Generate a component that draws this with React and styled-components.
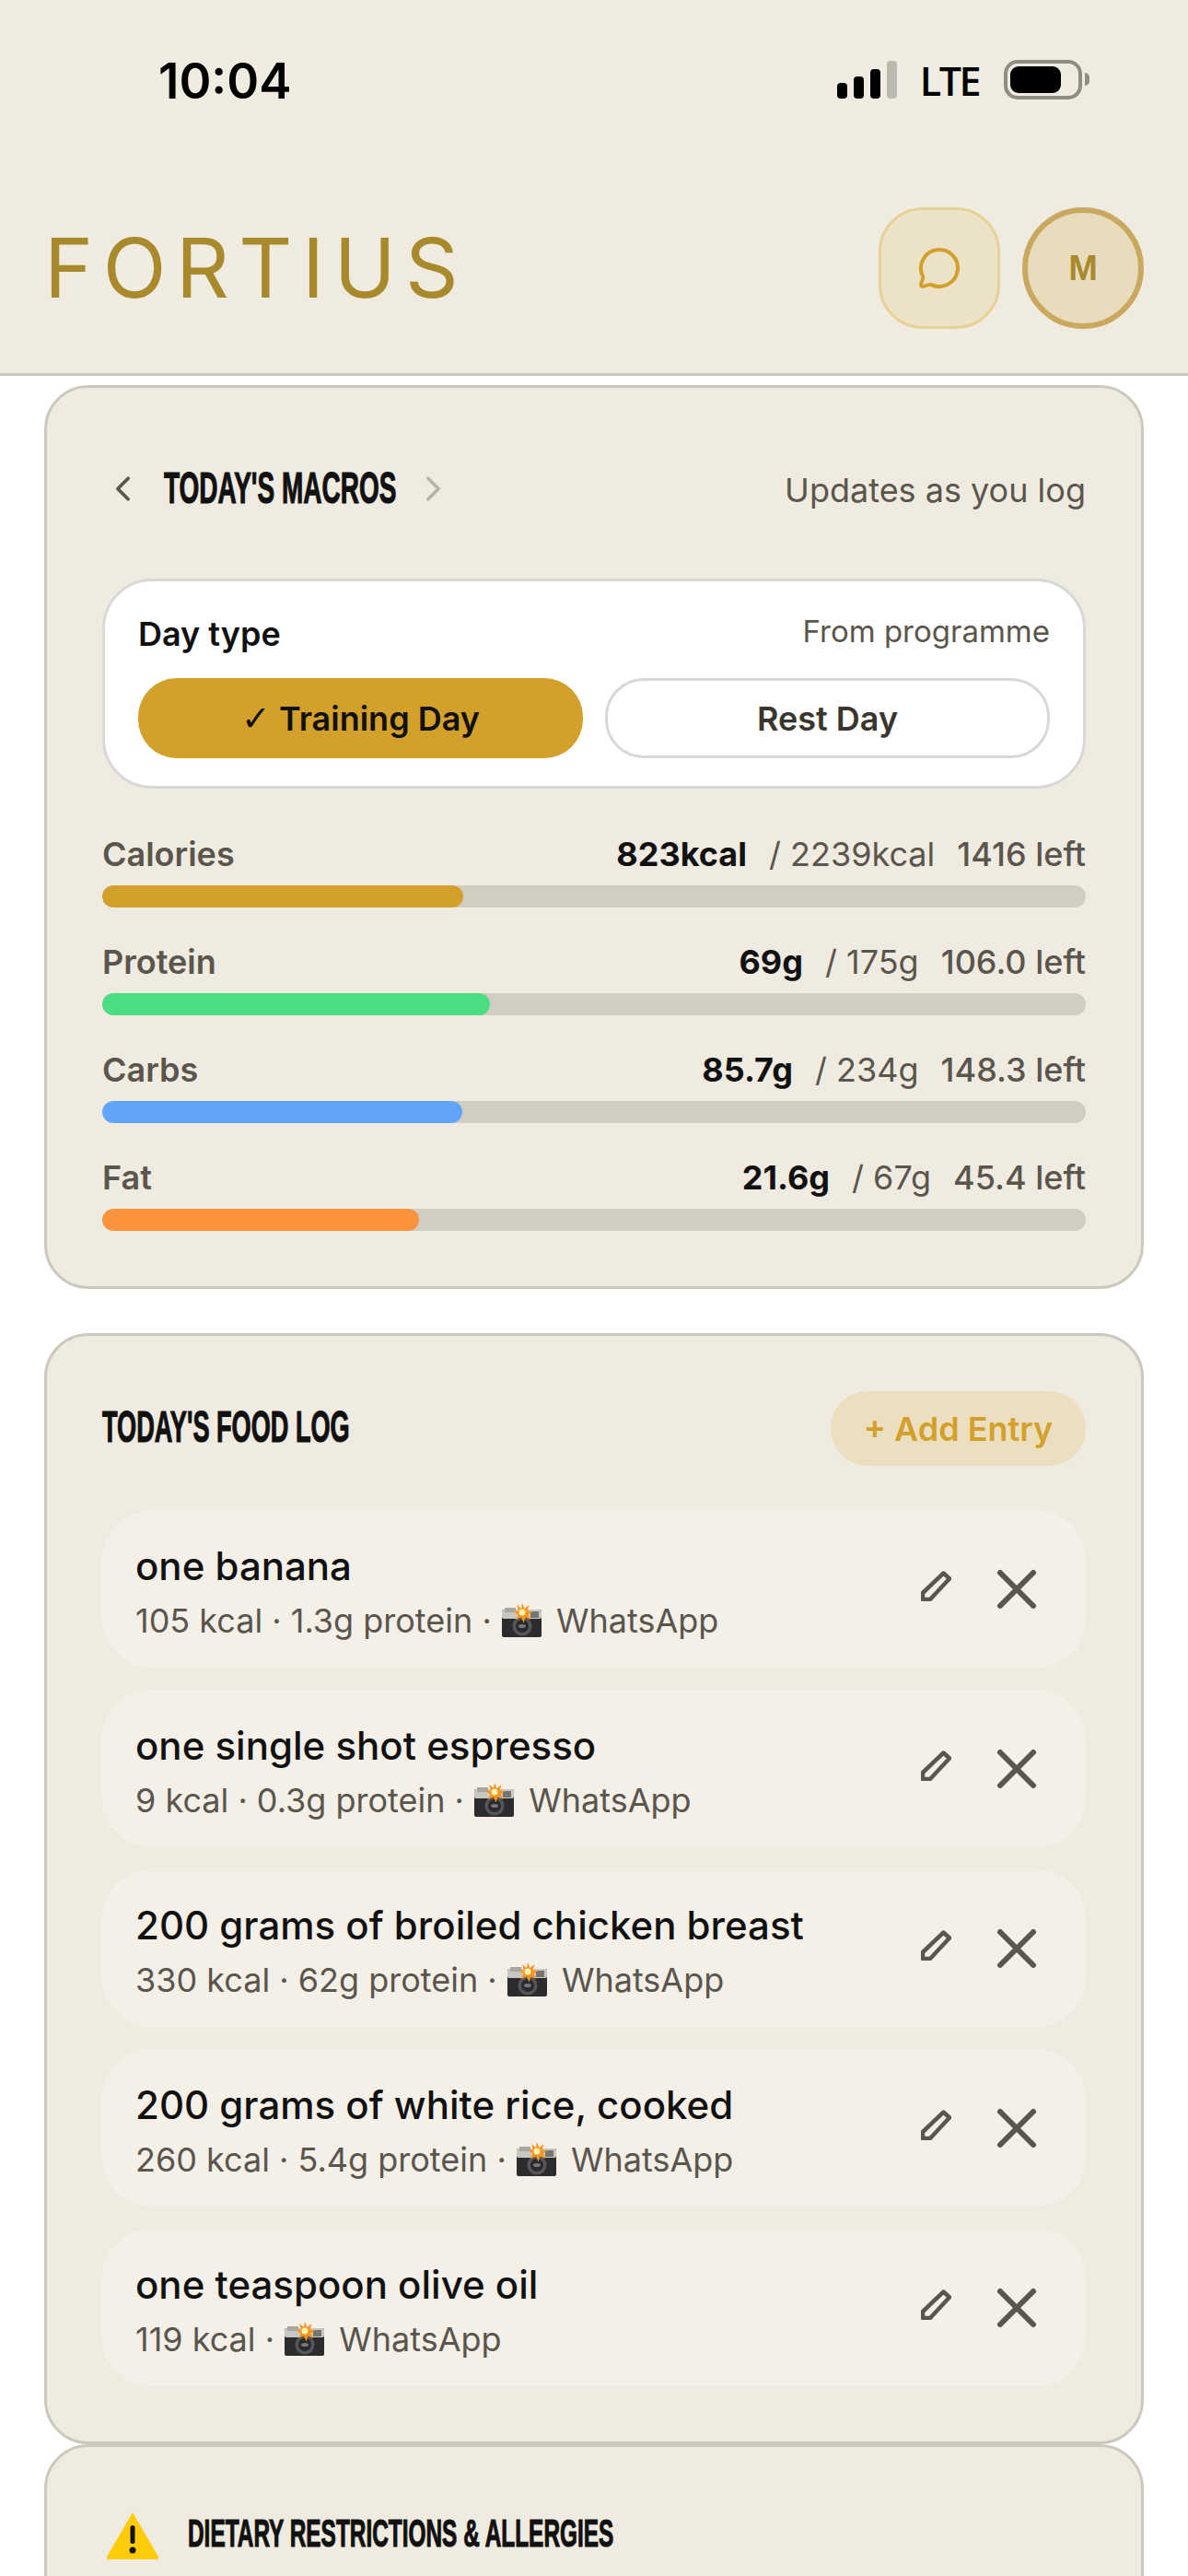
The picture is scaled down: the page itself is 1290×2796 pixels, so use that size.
import React from 'react'
import styled, { createGlobalStyle } from 'styled-components'
import { MessageCircle, X, ChevronLeft, ChevronRight } from 'lucide-react'

const Global = createGlobalStyle`
html, body {
    margin:0;
    padding:0;
    background:#fff;
    font-family:Inter, "DejaVu Sans", sans-serif;
}
* { box-sizing:border-box; }
`

const Page = styled.div`
width:1290px;
height:2796px;
overflow:hidden;
background:#fff;
`

const Header = styled.header`
position:relative;
height:408px;
background:#f0ebe0;
border-bottom:3px solid #cdc8bc;
padding:0 48px;
overflow:hidden;
`

const Watermark = styled.svg`
position:absolute;
left:0;
top:0;
`

const StatusBar = styled.div`
position:relative;
height:225px;
display:flex;
justify-content:space-between;
padding:60px 0 0 124px;
`

const Clock = styled.div`
font-size:53px;
line-height:56px;
font-weight:600;
color:#000;
`

const StatusIcons = styled.div`
display:flex;
align-items:flex-start;
padding:6px 67px 0 0;
`

const Signal = styled.div`
display:flex;
align-items:flex-end;
gap:7px;
height:41px;
margin-right:25px;
`

const SignalBar = styled.span`
width:11px;
height:${p => p.$h}px;
border-radius:4px;
background:${p => p.$off ? '#bdb9b0' : '#000'};
`

const Lte = styled.div`
font-family:"Open Sans", sans-serif;
font-size:43px;
line-height:44px;
font-weight:600;
letter-spacing:-2.5px;
color:#000;
margin-right:27px;
`

const Battery = styled.div`
position:relative;
width:85px;
height:43px;
margin-top:-1px;
border:4px solid #8f8c84;
border-radius:15px;
padding:3px;

&::after {
    content:'';
    position:absolute;
    right:-12px;
    top:10px;
    width:5px;
    height:14px;
    border-radius:0 5px 5px 0;
    background:#8f8c84;
}
`

const BatteryFill = styled.div`
width:55px;
height:100%;
background:#000;
border-radius:9px;
`

const BrandRow = styled.div`
position:relative;
display:flex;
justify-content:space-between;
align-items:center;
`

const Brand = styled.div`
font-size:90px;
line-height:132px;
font-weight:400;
color:#a88a2c;
letter-spacing:10.5px;
`

const HeaderButtons = styled.div`
display:flex;
gap:24px;
`

const ChatButton = styled.div`
width:132px;
height:132px;
border-radius:48px;
border:3px solid #e6d296;
background:#ece2c7;
display:flex;
align-items:center;
justify-content:center;
color:#d4a02c;
`

const Avatar = styled.div`
width:132px;
height:132px;
border-radius:50%;
border:6px solid #c9a860;
background:#e9dcbc;
display:flex;
align-items:center;
justify-content:center;
font-family:"Liberation Sans", sans-serif;
font-weight:700;
font-size:38px;
color:#a88a2c;
`

const Main = styled.main`
padding:10px 48px 0;
`

const Card = styled.section`
background:#f0ebe0;
border:3px solid #cdc8bc;
border-radius:48px;
padding:60px;
margin-bottom:${p => p.$gap || 0}px;
`

const CardHead = styled.div`
display:flex;
justify-content:space-between;
align-items:center;
height:${p => p.$h}px;
margin-bottom:${p => p.$mb}px;
`

const TitleGroup = styled.div`
display:flex;
align-items:center;
padding-top:2px;
`

const DisplayBox = styled.div`
width:${p => p.$w}px;
height:${p => p.$size + 4}px;
margin:${p => p.$m || 0};
flex-shrink:0;
`

const DisplayText = styled.div`
font-family:"Liberation Sans", sans-serif;
font-weight:700;
font-size:${p => p.$size}px;
line-height:${p => p.$size + 4}px;
color:#111;
white-space:nowrap;
transform-origin:left center;
transform:scaleX(${p => p.$sx});
-webkit-text-stroke:1.2px #111;
`

const Chevron = styled.span`
display:flex;
color:${p => p.$dim ? '#b8b3a7' : '#5a554d'};
`

const HeadNote = styled.div`
font-size:36px;
color:#5a554d;
padding-top:6px;
`

const DayPanel = styled.div`
background:#fff;
border:3px solid #d9d8d6;
border-radius:54px;
padding:33px 36px 30px;
margin-bottom:49px;
`

const DayHead = styled.div`
display:flex;
justify-content:space-between;
align-items:center;
height:48px;
margin-bottom:24px;
`

const DayLabel = styled.div`
font-size:36px;
font-weight:600;
color:#111;
`

const DaySource = styled.div`
font-size:33px;
color:#5a554d;
margin-top:-6px;
`

const DayButtons = styled.div`
display:grid;
grid-template-columns:1fr 1fr;
gap:24px;
`

const DayButton = styled.div`
height:87px;
border-radius:42px;
display:flex;
align-items:center;
justify-content:center;
font-size:36px;
font-weight:600;
white-space:pre;
background:${p => p.$on ? '#d4a02c' : '#fff'};
color:${p => p.$on ? '#111' : '#3a362f'};
border:${p => p.$on ? 'none' : '3px solid #d9d8d6'};
`

const Tick = styled.span`
font-family:"DejaVu Sans", sans-serif;
font-weight:400;
font-size:38px;
`

const MacroList = styled.div`
display:flex;
flex-direction:column;
gap:37px;
`

const MacroHead = styled.div`
display:flex;
justify-content:space-between;
align-items:center;
height:44px;
margin-bottom:12px;
`

const MacroName = styled.div`
font-size:36px;
font-weight:600;
color:#5a554d;
`

const MacroValues = styled.div`
display:flex;
align-items:center;
font-size:36px;
color:#5a554d;
`

const MacroNow = styled.span`
font-weight:700;
color:#111;
margin-right:24px;
`

const MacroLeft = styled.span`
font-weight:500;
margin-left:24px;
`

const Track = styled.div`
height:24px;
border-radius:12px;
background:#d2cdc1;
overflow:hidden;
`

const Fill = styled.div`
height:100%;
border-radius:12px;
background:${p => p.$color};
`

const AddEntry = styled.div`
height:81px;
width:277px;
border-radius:40px;
background:#ecdfc0;
color:#d4a02c;
font-size:36px;
font-weight:600;
display:flex;
align-items:center;
justify-content:center;
`

const FoodList = styled.div`
display:flex;
flex-direction:column;
gap:24px;
`

const FoodRow = styled.div`
height:171px;
border-radius:54px;
background:#f4f0e8;
padding:0 39px 0 36px;
display:flex;
align-items:center;
justify-content:space-between;
`

const FoodText = styled.div`
padding-top:7px;
`

const FoodName = styled.div`
font-size:42px;
line-height:52px;
font-weight:500;
color:#111;
margin-bottom:9px;
`

const FoodMeta = styled.div`
display:flex;
align-items:center;
font-size:36px;
line-height:48px;
color:#5a554d;
white-space:pre;
`

const FoodActions = styled.div`
display:flex;
align-items:center;
gap:35px;
color:#5a554d;
`

const PencilIcon = styled.svg`
width:33px;
height:33px;
margin-top:-6px;
`

const CameraIcon = styled.svg`
width:45px;
height:38px;
margin-right:5px;
`

const WarnIcon = styled.svg`
width:58px;
height:52px;
margin:0 31px 0 4px;
flex-shrink:0;
`

const WarnRow = styled.div`
display:flex;
align-items:center;
height:72px;
`

const macros = [
    { name:'Calories', now:'823kcal', goal:'/ 2239kcal', left:'1416 left', pct:36.7, color:'#d4a02c' },
    { name:'Protein', now:'69g', goal:'/ 175g', left:'106.0 left', pct:39.4, color:'#4ade80' },
    { name:'Carbs', now:'85.7g', goal:'/ 234g', left:'148.3 left', pct:36.6, color:'#60a5fa' },
    { name:'Fat', now:'21.6g', goal:'/ 67g', left:'45.4 left', pct:32.2, color:'#fb923c' },
]

const foods = [
    { name:'one banana', meta:'105 kcal · 1.3g protein · ' },
    { name:'one single shot espresso', meta:'9 kcal · 0.3g protein · ' },
    { name:'200 grams of broiled chicken breast', meta:'330 kcal · 62g protein · ' },
    { name:'200 grams of white rice, cooked', meta:'260 kcal · 5.4g protein · ' },
    { name:'one teaspoon olive oil', meta:'119 kcal · ' },
]

const CameraFlash = () => (
    <CameraIcon viewBox="0 0 45 38">
        <rect x="1" y="7" width="43" height="30" rx="2" fill="#2c2c2e" />
        <rect x="1" y="7" width="43" height="10" rx="2" fill="#c9c7c2" />
        <rect x="4" y="5" width="12" height="5" fill="#a9a7a2" />
        <rect x="32" y="9" width="9" height="7" fill="#77756f" />
        <circle cx="23" cy="25" r="10.500" fill="#55565a" />
        <circle cx="23" cy="25" r="7" fill="#2a2a2c" />
        <ellipse cx="23" cy="25" rx="4" ry="2" fill="#77787c" />
        <path d="M23 0l2.500 6 5-4-2 6.500 6 .5-5 3.500 3 5.500-6-2.500-2 6-2.500-6-6 2.500 2.500-5.500-5.500-3.500 6-.5-2-6.500 5 4z" fill="#f7941d" />
        <circle cx="23" cy="10" r="3.500" fill="#fff3b0" />
    </CameraIcon>
)

const Pencil = () => (
    <PencilIcon viewBox="0 0 33 33" fill="none" stroke="currentColor" strokeWidth="4.500" strokeLinejoin="round">
        <path d="M24.500 2.500 L31 8.500 L10 31 L2 31 L2 24 Z" />
    </PencilIcon>
)

const Warning = () => (
    <WarnIcon viewBox="0 0 58 52">
        <path d="M29 1 L57 49 Q58 52 55 52 L3 52 Q0 52 1 49 Z" fill="#ffcc0a" />
        <rect x="26.500" y="15" width="5" height="20" rx="2.500" fill="#111" />
        <circle cx="29" cy="42" r="3.500" fill="#111" />
    </WarnIcon>
)

function App() {
    return (
        <Page>
            <Global />
            <Header>
                <Watermark width="1290" height="408" viewBox="0 0 1290 408" fill="#f1ece1">
                    <ellipse cx="270" cy="110" rx="82" ry="90" />
                    <path d="M205 170 Q260 220 300 200 L340 400 L107 400 Q100 220 205 200 Z" />
                    <path d="M568 60 Q646 20 724 60 Q740 170 690 240 Q720 300 705 340 L590 340 Q570 280 605 240 Q555 170 568 60 Z" />
                    <ellipse cx="1012" cy="110" rx="66" ry="75" />
                    <ellipse cx="880" cy="270" rx="58" ry="65" />
                </Watermark>
                <StatusBar>
                    <Clock>10:04</Clock>
                    <StatusIcons>
                        <Signal>
                            <SignalBar $h={17} />
                            <SignalBar $h={24} />
                            <SignalBar $h={32} />
                            <SignalBar $h={41} $off />
                        </Signal>
                        <Lte>LTE</Lte>
                        <Battery><BatteryFill /></Battery>
                    </StatusIcons>
                </StatusBar>
                <BrandRow>
                    <Brand>FORTIUS</Brand>
                    <HeaderButtons>
                        <ChatButton><MessageCircle size={48} strokeWidth={2} /></ChatButton>
                        <Avatar>M</Avatar>
                    </HeaderButtons>
                </BrandRow>
            </Header>
            <Main>
                <Card $gap={48}>
                    <CardHead $h={96} $mb={51}>
                        <TitleGroup>
                            <Chevron><ChevronLeft size={45} strokeWidth={2} /></Chevron>
                            <DisplayBox $w={252} $size={48} $m="0 18px 0 22px">
                                <DisplayText $size={48} $sx={0.583}>TODAY'S MACROS</DisplayText>
                            </DisplayBox>
                            <Chevron $dim><ChevronRight size={45} strokeWidth={2} /></Chevron>
                        </TitleGroup>
                        <HeadNote>Updates as you log</HeadNote>
                    </CardHead>
                    <DayPanel>
                        <DayHead>
                            <DayLabel>Day type</DayLabel>
                            <DaySource>From programme</DaySource>
                        </DayHead>
                        <DayButtons>
                            <DayButton $on><Tick>✓</Tick> Training Day</DayButton>
                            <DayButton>Rest Day</DayButton>
                        </DayButtons>
                    </DayPanel>
                    <MacroList>
                        {macros.map(m => (
                            <div key={m.name}>
                                <MacroHead>
                                    <MacroName>{m.name}</MacroName>
                                    <MacroValues>
                                        <MacroNow>{m.now}</MacroNow>
                                        {m.goal}
                                        <MacroLeft>{m.left}</MacroLeft>
                                    </MacroValues>
                                </MacroHead>
                                <Track><Fill $color={m.color} style={{ width: `${m.pct}%` }} /></Track>
                            </div>
                        ))}
                    </MacroList>
                </Card>
                <Card>
                    <CardHead $h={81} $mb={48}>
                        <DisplayBox $w={270} $size={48} $m="-4px 0 0">
                            <DisplayText $size={48} $sx={0.565}>TODAY'S FOOD LOG</DisplayText>
                        </DisplayBox>
                        <AddEntry>+ Add Entry</AddEntry>
                    </CardHead>
                    <FoodList>
                        {foods.map(f => (
                            <FoodRow key={f.name}>
                                <FoodText>
                                    <FoodName>{f.name}</FoodName>
                                    <FoodMeta>{f.meta}<CameraFlash /> WhatsApp</FoodMeta>
                                </FoodText>
                                <FoodActions>
                                    <Pencil />
                                    <X size={72} strokeWidth={2} />
                                </FoodActions>
                            </FoodRow>
                        ))}
                    </FoodList>
                </Card>
                <Card>
                    <WarnRow>
                        <Warning />
                        <DisplayBox $w={463} $size={42} $m="-5px 0 0">
                            <DisplayText $size={42} $sx={0.581}>DIETARY RESTRICTIONS &amp; ALLERGIES</DisplayText>
                        </DisplayBox>
                    </WarnRow>
                </Card>
            </Main>
        </Page>
    )
}

export default App
